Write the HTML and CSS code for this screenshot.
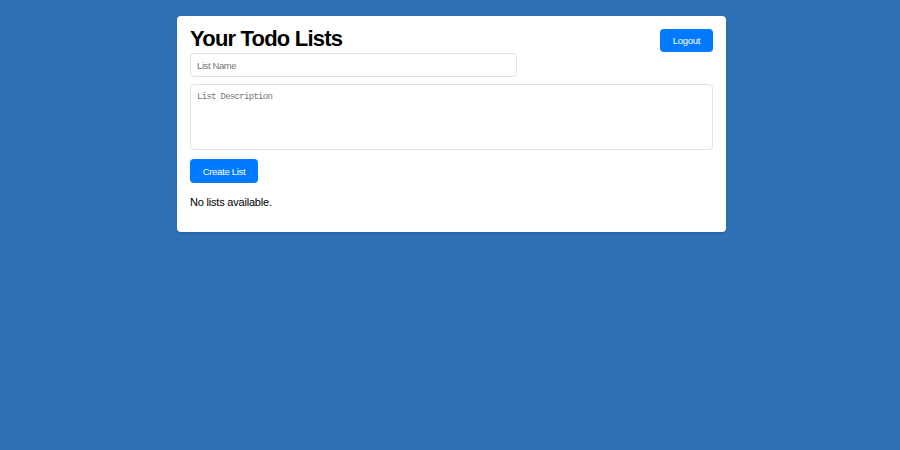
FILE: index.html
```html
<!DOCTYPE html>
<html lang="en">
<head>
<meta charset="utf-8">
<title>Your Todo Lists</title>
<link rel="stylesheet" href="styles.css">
</head>
<body>
<div class="card">
  <div class="header">
    <h1 class="title">Your Todo Lists</h1>
    <button class="btn btn-logout" type="button">Logout</button>
  </div>
  <form class="list-form">
    <input class="field field-name" type="text" placeholder="List Name">
    <textarea class="field field-desc" placeholder="List Description"></textarea>
    <button class="btn btn-create" type="button">Create List</button>
  </form>
  <p class="empty">No lists available.</p>
</div>
</body>
</html>
```
FILE: styles.css
```css
* { box-sizing: border-box; }
html, body { margin: 0; }
body {
  background: #2e71b5;
  padding: 16px 0 0 3px;
  height: 450px;
  font-family: "Liberation Sans", Arial, sans-serif;
  color: #000;
}
.card {
  width: 549px;
  margin: 0 auto;
  background: #fff;
  border-radius: 4px;
  padding: 13px 13px 13px;
  box-shadow: 0 1px 3px rgba(0,0,0,0.15);
}
.header {
  display: flex;
  justify-content: space-between;
  align-items: flex-start;
}
.title {
  margin: -4px 0 0;
  font-size: 22px;
  line-height: 27px;
  letter-spacing: -0.8px;
  font-weight: bold;
}
.btn {
  display: block;
  border: none;
  border-radius: 4px;
  background: #007bff;
  color: #fff;
  font-family: "Liberation Sans", Arial, sans-serif;
  font-size: 9.5px;
  letter-spacing: -0.3px;
  padding: 0;
  cursor: pointer;
}
.btn-logout { width: 53px; height: 23px; }
.list-form { display: flex; flex-direction: column; align-items: flex-start; }
.field {
  display: block;
  border: 1px solid #e2e2e2;
  border-radius: 4px;
  background: #fff;
  margin: 0;
  outline: none;
}
.field::placeholder { color: #777; }
.field-name {
  margin-top: 1px;
  width: 327px;
  height: 24px;
  padding: 0 6px;
  font-family: "Liberation Sans", Arial, sans-serif;
  font-size: 9.5px;
  letter-spacing: -0.4px;
}
.field-desc {
  margin-top: 7px;
  width: 100%;
  height: 66px;
  padding: 6px 6px;
  resize: none;
  font-family: "Liberation Mono", "DejaVu Sans Mono", monospace;
  font-size: 9px;
  letter-spacing: -0.7px;
  line-height: 12px;
}
.btn-create { margin-top: 9px; width: 68px; height: 24px; }
.empty {
  margin: 12px 0 10px;
  font-size: 11px;
  line-height: 14px;
  letter-spacing: -0.2px;
}
```
